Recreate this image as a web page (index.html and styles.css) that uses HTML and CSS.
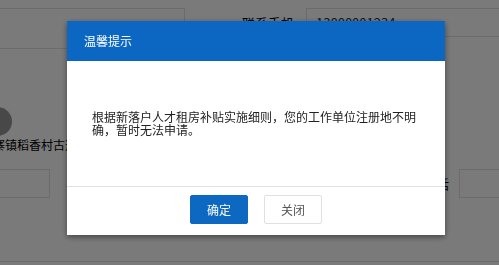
FILE: index.html
```html
<!DOCTYPE html>
<html lang="zh-CN">
<head>
  <meta charset="UTF-8">
  <meta name="viewport" content="width=device-width, initial-scale=1.0">
  <title>温馨提示</title>
  <link rel="stylesheet" href="styles.css">
</head>
<body>

  <!-- Form page behind the dialog -->
  <div class="page">
    <div class="top-row">
      <div class="text-box">
        <div class="text-box-line"></div>
      </div>
      <div class="field">
        <span class="field-label">联系手机</span>
        <div class="field-input">13800001234</div>
      </div>
    </div>

    <div class="avatar"></div>
    <p class="address">寨镇稻香村古道街道二号</p>

    <div class="input-row">
      <div class="input-small"></div>
      <div class="field field-right">
        <span class="field-label">联系电话</span>
        <div class="input-tail"></div>
      </div>
    </div>

    <div class="page-bottom"></div>
  </div>

  <!-- Dim mask and the dialog on top -->
  <div class="mask">
    <div class="dialog">
      <div class="dialog-header">温馨提示</div>
      <div class="dialog-body">
        根据新落户人才租房补贴实施细则，您的工作单位注册地不明确，暂时无法申请。
      </div>
      <div class="dialog-footer">
        <button class="btn btn-primary">确定</button>
        <button class="btn btn-default">关闭</button>
      </div>
    </div>
  </div>

</body>
</html>
```

FILE: styles.css
```css
/* Base page */
html, body {
  margin: 0;
  height: 100%;
  overflow: hidden;
}

body {
  font-family: "Noto Sans CJK SC", "Noto Sans", sans-serif;
  background: #fff;
  color: #000;
}

/* Form behind the mask */
.page {
  padding-top: 8px;
}

.top-row {
  display: flex;
  height: 80px;
}

.text-box {
  width: 185px;
  height: 80px;
  border-top: 1px solid #e2e2e2;
  border-right: 1px solid #e2e2e2;
  box-sizing: border-box;
}

.text-box-line {
  height: 39px;
  border-bottom: 1px solid #e2e2e2;
}

.field {
  display: flex;
  align-items: flex-start;
  flex: 1;
  margin-left: 57px;
}

.field-label {
  font-size: 13px;
  line-height: 29px;
  margin-right: 12px;
  white-space: nowrap;
}

.field-input {
  flex: 1;
  height: 29px;
  border: 1px solid #e2e2e2;
  border-right: none;
  box-sizing: border-box;
  font-size: 13px;
  line-height: 27px;
  padding-left: 9px;
  color: #333;
}

.avatar {
  width: 29px;
  height: 29px;
  border-radius: 50%;
  background: #979797;
  margin: 19px 0 0 -17px;
}

/* partly hidden behind the dialog, as in the live page */
.address {
  margin: 1px 0 0 -7px;
  font-size: 12px;
  line-height: 16px;
  white-space: nowrap;
}

.input-row {
  display: flex;
  justify-content: space-between;
  margin-top: 16px;
  height: 29px;
}

.input-small {
  width: 60px;
  margin-left: -10px;
  border: 1px solid #e2e2e2;
  box-sizing: border-box;
}

.field-right {
  flex: none;
  margin: 0;
}

.field-right .field-label {
  margin-right: 10px;
}

.input-tail {
  width: 40px;
  height: 29px;
  border: 1px solid #e2e2e2;
  border-right: none;
  box-sizing: border-box;
}

.page-bottom {
  margin-top: 63px;
  border-top: 1px solid #e2e2e2;
}

/* Dim mask */
.mask {
  position: fixed;
  top: 0;
  left: 0;
  right: 0;
  bottom: 0;
  background: rgba(0, 0, 0, 0.52);
}

/* Dialog */
.dialog {
  width: 378px;
  margin: 21px 0 0 67px;
  background: #fff;
  box-shadow: 0 2px 6px rgba(0, 0, 0, 0.45);
}

.dialog-header {
  height: 40px;
  line-height: 40px;
  padding-left: 17px;
  background: #0b67c2;
  color: #fff;
  font-size: 12px;
}

.dialog-body {
  padding: 49px 25px 50px;
  font-size: 12px;
  line-height: 13px;
  color: #222;
  border-bottom: 1px solid #e3e3e3;
}

.dialog-footer {
  display: flex;
  justify-content: center;
  gap: 16px;
  padding: 8px 0 11px;
}

.btn {
  width: 58px;
  height: 29px;
  font-family: inherit;
  font-size: 12px;
  border-radius: 2px;
  padding: 0;
  cursor: pointer;
}

.btn-primary {
  background: #0d68c1;
  border: 1px solid #0d68c1;
  color: #fff;
}

.btn-default {
  background: #fff;
  border: 1px solid #e0e0e0;
  color: #555;
}
```
